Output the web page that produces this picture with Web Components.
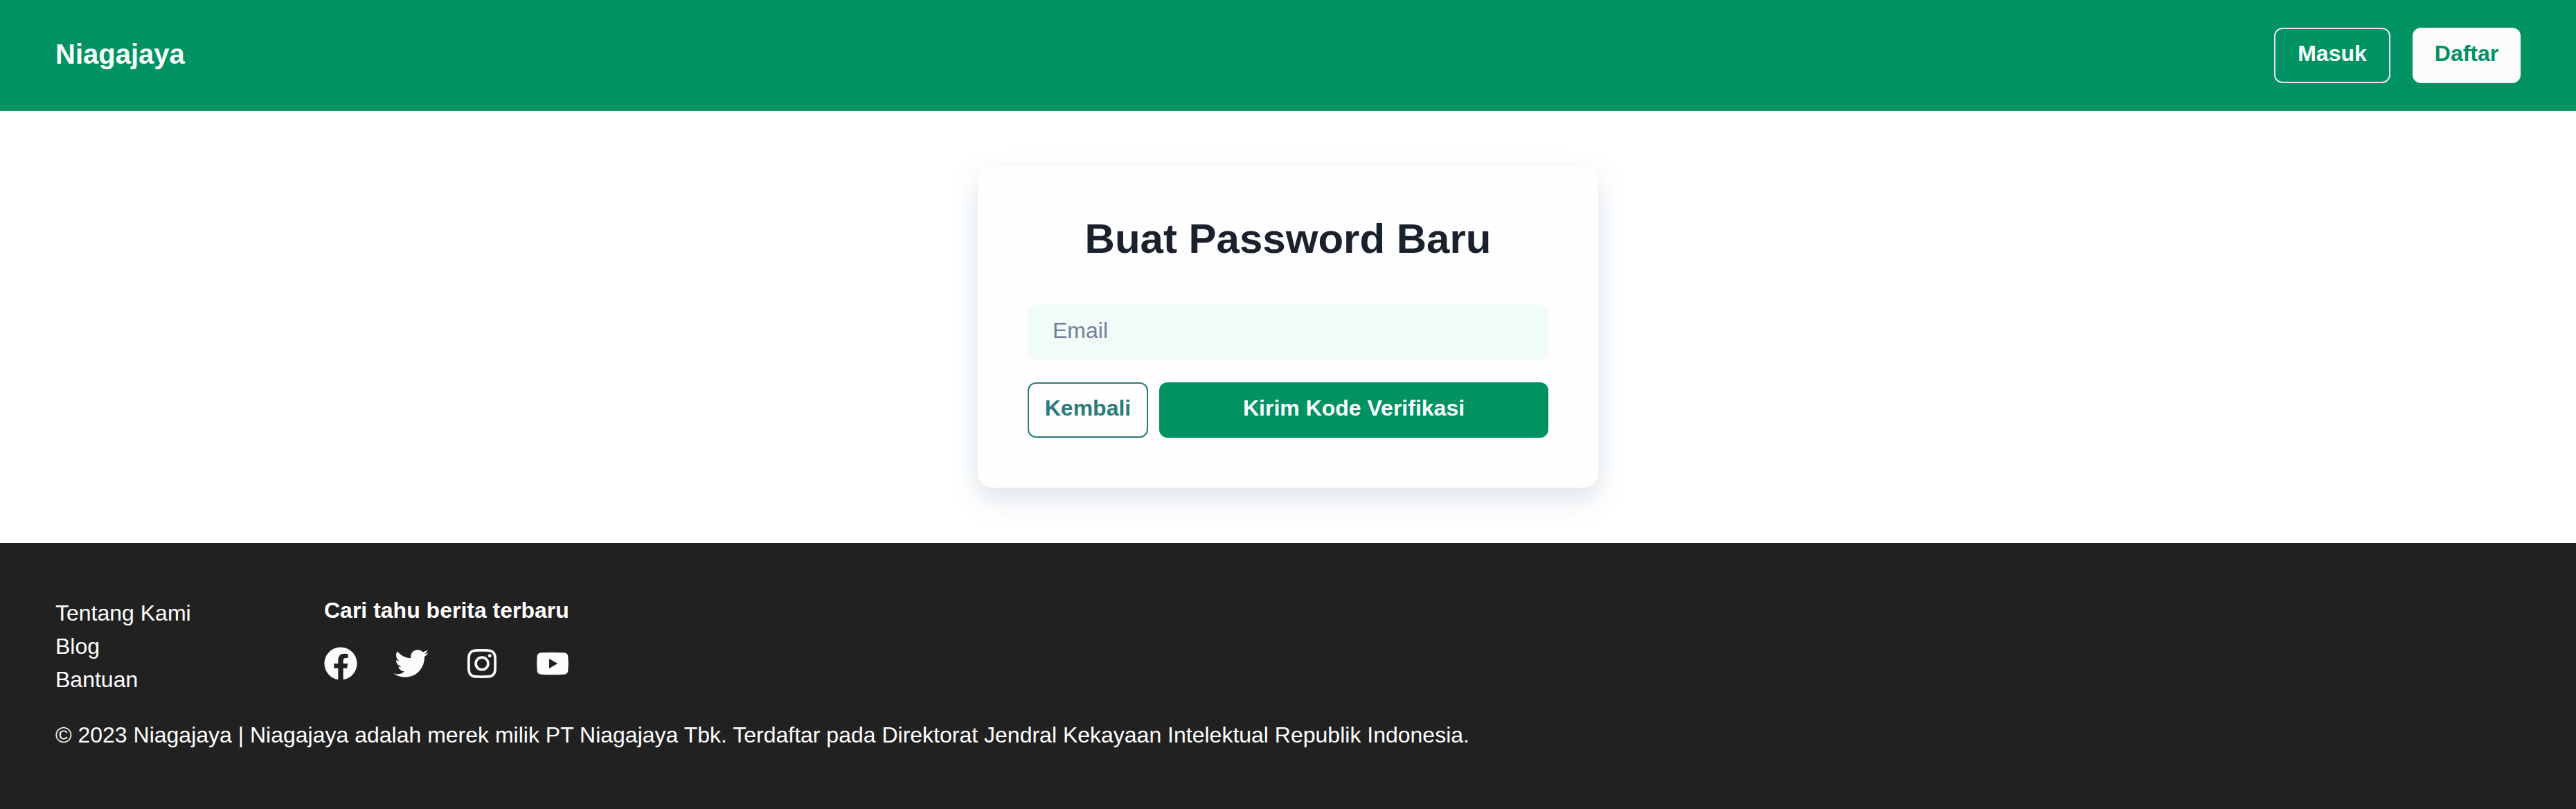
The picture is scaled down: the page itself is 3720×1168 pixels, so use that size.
<!DOCTYPE html>
<html lang="id">
<head>
<meta charset="utf-8">
<title>Niagajaya</title>
<style>
  body { margin: 0; background: #fff; color: #1a202c; font: 32px/48px "Liberation Sans", Arial, sans-serif; }
</style>
</head>
<body>
<nj-app></nj-app>
<script>
const define = (name, html) => {
  const template = document.createElement('template');
  template.innerHTML = html;
  customElements.define(name, class extends HTMLElement {
    constructor() {
      super();
      this.attachShadow({ mode: 'open' }).append(template.content.cloneNode(true));
    }
  });
};

define('nj-button', `
  <style>
    :host { display: block; flex: none; }
    button { display: flex; align-items: center; justify-content: center; box-sizing: border-box; width: 100%; height: 80px; margin: 0; padding: 0 0 6px; border: 0 solid; border-radius: 12px; background: #009262; color: #fff; font: bold 32px/38px "Liberation Sans", Arial, sans-serif; white-space: nowrap; }
    :host([kind=ghost]) button { background: transparent; border: 2px solid #e2e8f0; }
    :host([kind=light]) button { background: #fcfcfc; color: #009262; }
    :host([kind=outline]) button { background: transparent; border: 2px solid #2c7a7b; color: #2c7a7b; }
  </style>
  <button type="button"><slot></slot></button>`);

define('nj-header', `
  <style>
    :host { display: flex; align-items: center; justify-content: space-between; box-sizing: border-box; height: 160px; padding: 0 80px; background: #009262; }
    .brand { color: #fcfcfc; font-size: 40px; line-height: 48px; font-weight: bold; padding-bottom: 4px; }
    nav { display: flex; gap: 32px; }
    .in { width: 168px; } .up { width: 156px; }
  </style>
  <div class="brand">Niagajaya</div>
  <nav><nj-button class="in" kind="ghost">Masuk</nj-button><nj-button class="up" kind="light">Daftar</nj-button></nav>`);

define('nj-field', `
  <style>
    :host { display: block; }
    input { display: block; box-sizing: border-box; width: 100%; height: 80px; margin: 0; padding: 0 36px 6px; border: 0; border-radius: 12px; background: #f1fbf8; font: 32px "Liberation Sans", Arial, sans-serif; color: #1a202c; }
    input::placeholder { color: #718096; opacity: 1; }
  </style>
  <input type="email" placeholder="Email">`);

define('nj-card', `
  <style>
    :host { display: flex; flex-direction: column; box-sizing: border-box; width: 896px; height: 464px; padding: 69px 72px 72px; background: #fefefe; border-radius: 20px; box-shadow: 0 16px 38px rgba(103,138,172,.24); }
    h1 { margin: 0 0 59px; text-align: center; font-size: 60px; line-height: 72px; color: #1a202c; }
    .actions { display: flex; gap: 16px; margin-top: 32px; }
    .back { width: 174px; } .send { flex: 1; }
  </style>
  <h1>Buat Password Baru</h1>
  <nj-field></nj-field>
  <div class="actions"><nj-button class="back" kind="outline">Kembali</nj-button><nj-button class="send">Kirim Kode Verifikasi</nj-button></div>`);

define('nj-social', `
  <style>
    :host { display: flex; gap: 54px; color: #fcfcfc; }
    svg { display: block; width: 48px; height: 48px; overflow: visible; fill: currentColor; }
  </style>
  <svg viewBox="1.8 1.8 20.4 20.4"><path d="M12.001 2.002c-5.522 0-9.999 4.477-9.999 9.999 0 4.99 3.656 9.126 8.437 9.879v-6.988h-2.54v-2.891h2.54V9.798c0-2.508 1.493-3.891 3.776-3.891 1.094 0 2.24.195 2.24.195v2.459h-1.264c-1.24 0-1.628.772-1.628 1.563v1.875h2.771l-.443 2.891h-2.328v6.988C18.344 21.129 22 16.992 22 12.001c0-5.522-4.477-9.999-9.999-9.999z"/></svg>
  <svg viewBox="330 27 144 144"><path d="M325 142C333 145 340 146 347 145C357 144 365 140 373 133C360 133 350 125 346 113C350 114 354 114 358 112C345 109 336 98 336 84C340 86 344 88 349 88C337 80 332 62 341 46C356 64 376 75 400 76C396 56 410 40 430 40C439 40 446 44 451 49C459 48 466 45 473 40C471 47 467 52 461 56C466 56 469 55 474 53C470 60 465 65 459 69C460 116 427 158 375 158C356 158 340 153 325 142Z"/></svg>
  <svg viewBox="-32 0 512 512"><path d="M224.1 141c-63.6 0-114.9 51.3-114.9 114.9s51.3 114.9 114.9 114.9S339 319.5 339 255.9 287.7 141 224.1 141zm0 189.6c-41.1 0-74.7-33.5-74.7-74.7s33.5-74.7 74.7-74.7 74.7 33.5 74.7 74.7-33.6 74.7-74.7 74.7zm146.4-194.3c0 14.9-12 26.8-26.8 26.8-14.9 0-26.8-12-26.8-26.8s12-26.8 26.8-26.8 26.8 12 26.8 26.8zm76.1 27.2c-1.7-35.9-9.9-67.7-36.2-93.9-26.2-26.2-58-34.4-93.9-36.2-37-2.1-147.9-2.1-184.9 0-35.8 1.7-67.6 9.9-93.9 36.1s-34.4 58-36.2 93.9c-2.1 37-2.1 147.9 0 184.9 1.7 35.9 9.9 67.7 36.2 93.9s58 34.4 93.9 36.2c37 2.1 147.9 2.1 184.9 0 35.9-1.7 67.7-9.9 93.9-36.2 26.2-26.2 34.4-58 36.2-93.9 2.1-37 2.1-147.8 0-184.8zM398.8 388c-7.8 19.6-22.9 34.7-42.6 42.6-29.5 11.7-99.5 9-132.1 9s-102.7 2.6-132.1-9c-19.6-7.8-34.7-22.9-42.6-42.6-11.7-29.5-9-99.5-9-132.1s-2.6-102.7 9-132.1c7.8-19.6 22.9-34.7 42.6-42.6 29.5-11.7 99.5-9 132.1-9s102.7-2.6 132.1 9c19.6 7.8 34.7 22.9 42.6 42.6 11.7 29.5 9 99.5 9 132.1s2.7 102.7-9 132.1z"/></svg>
  <svg viewBox="342 27 144 144"><path fill-rule="evenodd" d="M366 52Q414 50 462 52C475 53 480 59 481 70Q484 99 481 128C480 139 475 145 462 146Q414 149 366 146C353 145 348 139 347 128Q344 99 347 70C348 59 353 53 366 52ZM399 78V120L436 99Z"/></svg>`);

define('nj-footer', `
  <style>
    :host { display: flex; flex-direction: column; gap: 32px; box-sizing: border-box; height: 384px; padding: 77px 80px 0; background: #212121; color: #fff; }
    .top { display: flex; height: 144px; }
    ul { list-style: none; margin: 0; padding: 0; width: 388px; }
    h2 { margin: 1px 0 34px; font-size: 32px; line-height: 38px; }
    p { margin: 0; }
  </style>
  <div class="top">
    <ul><li>Tentang Kami</li><li>Blog</li><li>Bantuan</li></ul>
    <section><h2>Cari tahu berita terbaru</h2><nj-social></nj-social></section>
  </div>
  <p>© 2023 Niagajaya | Niagajaya adalah merek milik PT Niagajaya Tbk. Terdaftar pada Direktorat Jendral Kekayaan Intelektual Republik Indonesia.</p>`);

define('nj-app', `
  <style>
    :host { display: block; }
    main { display: flex; justify-content: center; padding: 80px 0; }
  </style>
  <nj-header></nj-header>
  <main><nj-card></nj-card></main>
  <nj-footer></nj-footer>`);
</script>
</body>
</html>
